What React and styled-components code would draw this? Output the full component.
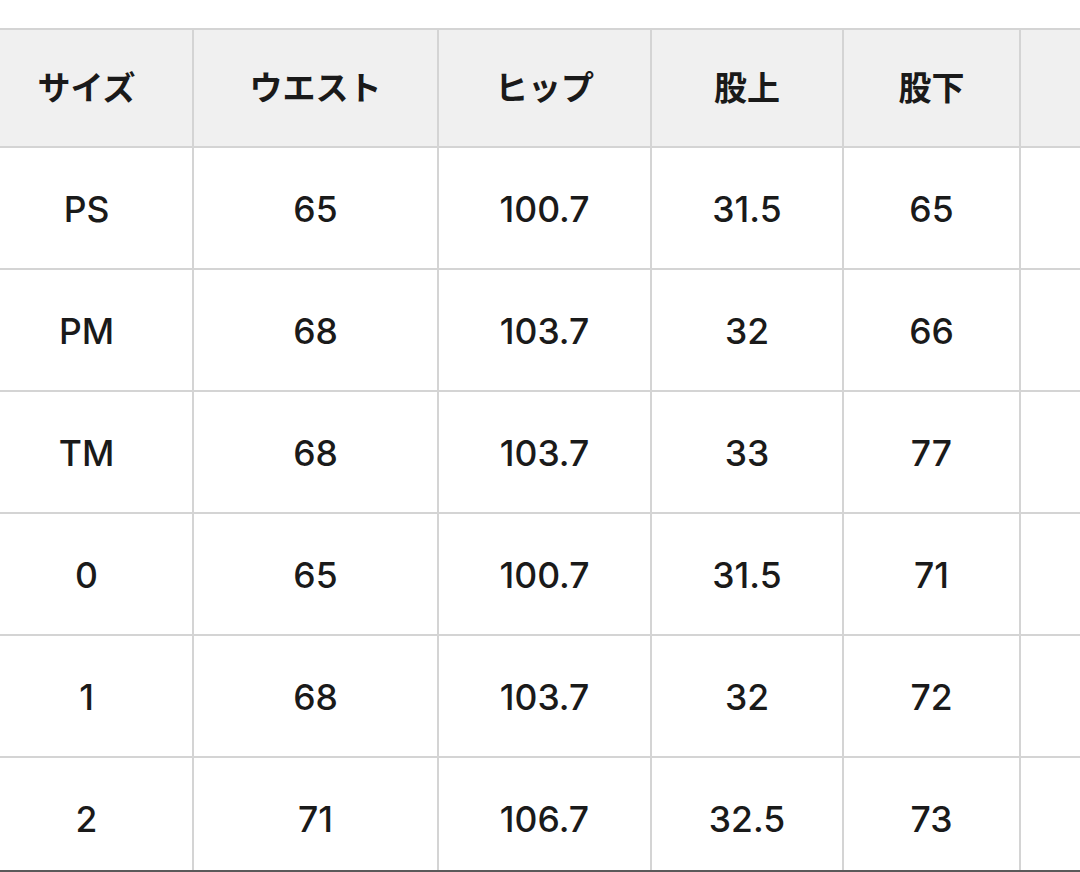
import React from 'react'
import styled, { createGlobalStyle } from 'styled-components'

const GlobalStyle = createGlobalStyle`
  html, body {
    margin: 0;
    padding: 0;
    background: #ffffff;
  }
`

const columns = ['サイズ', 'ウエスト', 'ヒップ', '股上', '股下', '']

const rows = [
  ['PS', '65', '100.7', '31.5', '65', ''],
  ['PM', '68', '103.7', '32', '66', ''],
  ['TM', '68', '103.7', '33', '77', ''],
  ['0', '65', '100.7', '31.5', '71', ''],
  ['1', '68', '103.7', '32', '72', ''],
  ['2', '71', '106.7', '32.5', '73', ''],
]

const Page = styled.div`
  height: 872px;
  box-sizing: border-box;
  padding-top: 28px;
  overflow: hidden;
  border-bottom: 2px solid #5a5a5a;
`

const Grid = styled.div`
  display: grid;
  grid-template-columns: 213px 245px 213px 192px 177px 200px;
  grid-template-rows: 118px repeat(6, 122px);
  margin-left: -19px;
  width: max-content;
  border-top: 2px solid #d4d4d4;
`

const Cell = styled.div`
  box-sizing: border-box;
  display: flex;
  align-items: center;
  justify-content: center;
  border-right: 2px solid #d4d4d4;
  border-bottom: 2px solid #d4d4d4;
  background: ${p => (p.$head ? '#f0f0f0' : '#ffffff')};
  color: #1a1a1a;
  font-family: ${p =>
    p.$head
      ? '"Noto Sans CJK JP", sans-serif'
      : 'Inter, "Noto Sans CJK JP", sans-serif'};
  font-size: ${p => (p.$head ? '33px' : '35.5px')};
  font-weight: ${p => (p.$head ? 700 : 500)};
  padding: ${p => (p.$head ? '0 0 4px' : '3px 0 0')};
`

export default function App() {
  return (
    <Page>
      <GlobalStyle />
      <Grid>
        {columns.map((c, i) => (
          <Cell key={'h' + i} $head>
            {c}
          </Cell>
        ))}
        {rows.map((r, ri) =>
          r.map((v, ci) => <Cell key={ri + '-' + ci}>{v}</Cell>)
        )}
      </Grid>
    </Page>
  )
}
